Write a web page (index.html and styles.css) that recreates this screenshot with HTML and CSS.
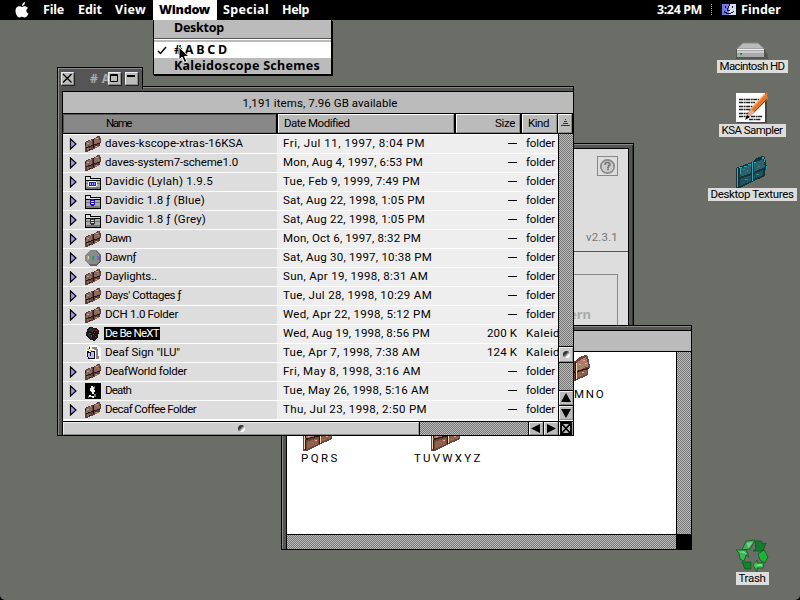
FILE: index.html
```html
<!DOCTYPE html>
<html lang="en">
<head>
<meta charset="utf-8">
<title>Finder</title>
<link rel="stylesheet" href="styles.css">
</head>
<body>
<svg class="defs" width="0" height="0">
  <symbol id="books" viewBox="0 0 16 16" shape-rendering="crispEdges">
    <path fill="#5d3f3b" d="M0 6L4 4 10 2 13 0H15L16 4 15 10 9 13 2 16H0Z"/>
    <path fill="#8c6a63" d="M1 6L7 4V9L1 11ZM9 3L14 1 15 6 9 9Z"/>
    <path fill="#a06b58" d="M11 4H14V6H11ZM10 10H14V11H12V12H10ZM2 12H6V13H4V14H2Z"/>
    <path fill="#2b1512" d="M1 11H3V10H6V9H9V8H12V7H15V8H12V9H9V10H6V11H3V12H1ZM8 3H9V12H8ZM0 7H1V9H0ZM4 13H6V14H4Z"/>
    <path fill="#c2a098" d="M5 4H6V5H5ZM11 2H13V3H11ZM2 7H4V8H2ZM11 10H12V11H11Z"/>
    <path fill="#57704d" d="M3 8H4V10H3ZM5 6H6V7H5ZM11 5H12V6H11ZM3 12H5V13H3Z"/>
  </symbol>
  <symbol id="bigbooks" viewBox="0 0 32 32" shape-rendering="crispEdges">
    <path fill="#6b453b" d="M0 12L8 9 16 6 21 2 26 0 29 1 31 12 29 14V20L16 26 4 32H0Z"/>
    <path fill="#b07c6b" d="M3 12L15 8V17L3 21ZM18 7L27 2 30 11 18 16Z"/>
    <path fill="#935f4c" d="M4 23L15 19V25L4 30ZM18 18L28 14V19L18 23Z"/>
    <path fill="#2e1814" d="M2 21H5V20H8V19H12V18H16V17H20V16H24V15H28V14H30V13H27V14H23V15H19V16H15V17H11V18H7V19H2ZM16 7H17V25H16ZM2 13H3V31H2Z"/>
    <path fill="#ead9b2" d="M1 13H2V30H1ZM17 8H18V24H17Z"/>
    <path fill="#7b8455" d="M6 13H8V14H6ZM10 15H12V16H10ZM22 8H24V9H22ZM25 11H27V12H25ZM20 20H22V21H20ZM8 23H10V24H8ZM19 11H20V13H19Z"/>
    <path fill="#dfaa96" d="M24 5H26V6H24ZM20 9H22V10H20ZM26 8H28V9H26ZM11 12H13V13H11ZM5 17H7V18H5ZM23 17H25V18H23ZM12 21H14V22H12Z"/>
  </symbol>
  <symbol id="davidic-lylah" viewBox="0 0 16 16" shape-rendering="crispEdges">
    <path fill="#000" d="M0 2H6V4H16V16H0Z"/><path fill="#ddd" d="M1 3H5V5H15V6H1Z"/><path fill="#aaa" d="M1 7H15V9H1ZM1 10H15V15H1Z"/><path fill="#777" d="M1 9H15V10H1ZM1 13H15V15H1Z"/>
    <path fill="#fff" d="M4 7H11V8H4ZM3 8H4V12H3ZM11 8H12V12H11ZM4 12H11V13H4Z"/><path fill="#30209a" d="M4 8H11V12H4Z"/><path fill="#aaf" d="M5 9H6V11H5ZM7 9H8V11H7ZM9 9H10V11H9Z"/>
  </symbol>
  <symbol id="davidic-blue" viewBox="0 0 16 16" shape-rendering="crispEdges">
    <path fill="#000" d="M0 2H6V4H16V16H0Z"/><path fill="#ddd" d="M1 3H5V5H15V6H1Z"/><path fill="#aaa" d="M1 7H15V9H1ZM1 10H15V15H1Z"/><path fill="#777" d="M1 9H15V10H1ZM1 13H15V15H1Z"/>
    <path fill="#2813a5" d="M6 6H9V7H10V12H9V13H6V12H5V7H6Z"/><path fill="#ddf" d="M6 8H9V9H6ZM6 10H9V11H6Z"/>
  </symbol>
  <symbol id="davidic-grey" viewBox="0 0 16 16" shape-rendering="crispEdges">
    <path fill="#000" d="M0 2H6V4H16V16H0Z"/><path fill="#ddd" d="M1 3H5V5H15V6H1Z"/><path fill="#aaa" d="M1 7H15V9H1ZM1 10H15V15H1Z"/><path fill="#777" d="M1 9H15V10H1ZM1 13H15V15H1Z"/>
    <path fill="#333" d="M6 6H9V7H10V12H9V13H6V12H5V7H6Z"/><path fill="#ddd" d="M6 8H9V9H6ZM6 10H9V11H6Z"/>
  </symbol>
  <symbol id="octagon" viewBox="0 0 16 16" shape-rendering="crispEdges">
    <path fill="#8a8a8a" d="M5 0H11L16 5V11L11 16H5L0 11V5Z"/><path fill="#666" d="M11 1L16 5V11L11 16H5L3 14H11L14 11V5Z"/>
    <path fill="#e9974d" d="M2 6H4V10H2Z"/><path fill="#fc9" d="M3 6H4V9H3Z"/><path fill="#16a08c" d="M7 6H9V10H7Z"/><path fill="#76c" d="M12 6H14V10H12Z"/>
  </symbol>
  <symbol id="cube" viewBox="0 0 16 16" shape-rendering="crispEdges">
    <path fill="#171717" d="M4 1L11 2 14 5 13 11 9 15 4 13 1 9 2 4Z"/><path fill="#2c2c2c" d="M5 2L10 3 8 6 3 5ZM3 8L7 9V13L4 11Z"/>
    <path fill="#a02424" d="M10 4H12V5H10ZM9 6H10V7H9ZM10 10H11V11H10ZM7 5H8V6H7Z"/><path fill="#147734" d="M4 7H6V8H4ZM6 9H7V11H6ZM8 8H9V9H8Z"/>
  </symbol>
  <symbol id="ilu" viewBox="0 0 16 16" shape-rendering="crispEdges">
    <path fill="#fff" d="M4 0H13L16 4V16H10L5 15 1 11V3Z"/><path fill="#111" d="M2 6H4V7H6V6H10V14H3V12H2ZM4 2H5V4H4Z"/>
    <path fill="#bbf" d="M3 8H5V11H9V13H4V12H3ZM6 7H9V11H6Z"/><path fill="#e7b12b" d="M2 3H4V5H2ZM5 5H7V6H5ZM4 1H5V2H4Z"/><path fill="#888" d="M7 2H12V4H13V11H14V14H11V5H9V4H7Z"/>
  </symbol>
  <symbol id="death" viewBox="0 0 16 16" shape-rendering="crispEdges">
    <path d="M0 0H16V16H0Z"/><path fill="#eee" d="M6 3H8V4H9V7H10V9H9V11H7V9H6V8H5V5H6ZM4 12H6V13H9V15H7V14H4Z"/><path fill="#777" d="M9 3H10V6H9ZM9 11H11V14H9ZM3 13H4V15H3Z"/>
  </symbol>
</svg>

<main class="desktop">
  <section class="window about">
    <div class="about-pane">
      <div class="about-head"><span class="help">
        <svg width="17" height="17" viewBox="0 0 17 17"><circle cx="8.500" cy="8.500" r="6.700" fill="#ccc" stroke="#888" stroke-width="1.700"/><path d="M6 7V5.500H7V4.500H10V5.500H11V7.500H9.500V9.500H8M8 11.500H10" fill="none" stroke="#777" stroke-width="1.300"/></svg>
      </span><span class="version" data-w="32">v2.3.1</span></div>
      <div class="about-box"><b>ern</b></div>
    </div>
  </section>

  <section class="window groups">
    <div class="groups-info"></div>
    <div class="groups-body">
      <div class="canvas">
        <div class="pin p1"><svg width="32" height="32"><use href="#bigbooks"/></svg><span data-w="36">P Q R S</span></div>
        <div class="pin p2"><svg width="32" height="32"><use href="#bigbooks"/></svg><span data-w="66">T U V W X Y Z</span></div>
        <div class="pin p3"><svg width="32" height="32"><use href="#bigbooks"/></svg><span data-w="29">M N O</span></div>
      </div>
      <div class="dither vbar"></div>
      <div class="dither hbar"></div>
      <div class="corner"></div>
    </div>
  </section>

  <div class="tab">
    <span class="tbtn"><svg width="11" height="11" viewBox="0 0 11 11"><path d="M1 1L9.500 9.500M9.500 1L1 9.500" stroke="#000" stroke-width="1.300"/></svg></span>
    <span class="tab-title"># A</span>
    <span class="tbtn"><svg width="11" height="11" viewBox="0 0 11 11"><path d="M1.500 1.500H8.500V8.500H1.500ZM1.500 2.500H8.500" stroke="#000" fill="none"/></svg></span>
    <span class="tbtn gap"><svg width="11" height="11" viewBox="0 0 11 11"><path d="M1 2H9V4H1Z"/></svg></span>
  </div>
  <section class="window list">
    <div class="info"><span data-w="155">1,191 items, 7.96 GB available</span></div>
    <div class="head">
      <div class="h on"><span data-w="25">Name</span></div>
      <div class="h"><span data-w="65">Date Modified</span></div>
      <div class="h end"><span data-w="20">Size</span></div>
      <div class="h"><span data-w="21">Kind</span></div>
      <div class="h sort"><svg width="9" height="8" viewBox="0 0 9 8" shape-rendering="crispEdges"><path fill="#333" d="M4 0H5V1H4ZM3 2H6V3H3ZM2 4H7V5H2ZM0 6H9V7H0Z"/></svg></div>
    </div>
    <div class="body">
      <div class="rows" id="rows"></div>
      <div class="vscroll">
        <div class="dither track1"></div>
        <div class="thumb"><i></i></div>
        <div class="dither track2"></div>
        <div class="arrow"><svg width="14" height="14"><path d="M7 2L12 11H2Z"/></svg></div>
        <div class="arrow"><svg width="14" height="14"><path d="M2 3H12L7 12Z"/></svg></div>
      </div>
    </div>
    <div class="hscroll">
      <div class="thumb"><i></i></div>
      <div class="dither"></div>
      <div class="arrow"><svg width="14" height="13"><path d="M2 6.500L11 2V11Z"/></svg></div>
      <div class="arrow"><svg width="14" height="13"><path d="M12 6.500L3 2V11Z"/></svg></div>
      <div class="arrow grow"><svg width="14" height="13"><path d="M2 1H12V12H2ZM2 1L12 12M12 1L2 12" fill="none" stroke="#000" stroke-width="1.800"/></svg></div>
    </div>
  </section>

  <div class="item hd">
    <svg width="32" height="18" viewBox="0 0 32 18"><path d="M8 3H24L29 8 32 13V17H4L2 9Z" fill="#555851"/><path d="M7 1H22L28.500 7H.5Z" fill="#bbb" stroke="#888"/><path d="M0 7H29V16H0Z" fill="#aaa"/><path d="M1 7H28V8H1Z" fill="#eee"/><path d="M1 9H28V11H1Z" fill="#ccc"/><path d="M0 15H29V17H0ZM0 7H1V16H0ZM28 7H29V16H28Z" fill="#555"/><path d="M4 11H6V12H4Z" fill="#d22"/><path d="M4 12H6V13H4Z" fill="#1a3"/></svg>
    <span data-w="65">Macintosh HD</span>
  </div>
  <div class="item ksa">
    <svg width="32" height="32" viewBox="0 0 32 32"><path d="M1 2H31V31H1Z" fill="#444"/><path d="M0 1H29V30H0Z" fill="#fff"/><path d="M3 7.500H23M3 10.500H19M3 14.500H17M3 17.500H15M3 21.500H14M3 24.500H12M15 24.500H26M13 27.500H25" stroke="#222" stroke-width="1.600" stroke-dasharray="4 .6 2 .5"/><path d="M31 0L32 7 18 21 10 27 13 19Z" fill="#dd7733"/><path d="M28 4L13 19M31 7L18 20" stroke="#842" stroke-width="1"/><path d="M29 2L15 17" stroke="#fa6" stroke-width="1.500"/><path d="M14 17L19 20 11 26Z" fill="#e8a79d"/><path d="M11 23L14 25 9 28Z"/></svg>
    <span data-w="61">KSA Sampler</span>
  </div>
  <div class="item tex">
    <svg width="32" height="32" viewBox="0 0 32 32" shape-rendering="crispEdges"><path fill="#12343b" d="M0 12L8 9 16 6 21 2 26 0 29 1 31 12 29 14V20L16 26 4 32H0Z"/><path fill="#2b626b" d="M4 13L15 8V17L4 21ZM18 7L27 3 29 11 18 16Z"/><path fill="#22525b" d="M4 23L15 19V25L4 30ZM18 18L27 14V19L18 23Z"/><path fill="#35a5b8" d="M1 12H2V31H1ZM16 6H17V25H16ZM4 12H5V18H4ZM26 1H28V3H26ZM28 3H29V6H28ZM3 11H6V12H3ZM18 6H20V7H18ZM30 10H31V13H30ZM8 10H11V11H8ZM12 8H15V9H12Z"/><path fill="#488070" d="M7 13H9V14H7ZM22 10H24V11H22ZM9 23H12V24H9ZM20 18H23V19H20ZM11 14H12V16H11Z"/></svg>
    <span data-w="83">Desktop Textures</span>
  </div>
  <div class="item trash">
    <svg width="32" height="32" viewBox="0 0 32 32" stroke="#075019" stroke-width=".7"><path fill="#43af5a" d="M10 1L19 0 14 9 6 10Z"/><path fill="#137d2d" d="M19 1H25L27 4 30 3 27 11H17L20 9Z"/><path fill="#39b952" d="M0 10H10L13 17 10 15 8 21 4 19 3 13Z"/><path fill="#1eb438" d="M22 14L28 10 32 17 29 23 24 20Z"/><path fill="#14832c" d="M6 22H15V29H9Z"/><path fill="#39c451" d="M17 25L21 20V23H28L27 28H21V32Z"/><path d="M11 3L17 2 12 8ZM3 12L8 11 10 14ZM22 24H26V26H20Z" fill="#a0e5ae" stroke="none" opacity=".65"/></svg>
    <span data-w="27">Trash</span>
  </div>

  <nav class="menubar">
    <svg class="apple" width="14" height="16" viewBox="0 0 14 16"><path fill="#fff" d="M7 4C7 2 8 .5 10 0 10 2 9 3.500 7 4ZM3 4.500C5 4 6 5 7 5S9 4 11 4.500C12 5 12.500 5.500 13 6 10.500 7.500 11 10.500 13.500 11.500 12.500 14 11 15.500 9.500 15.500 8.500 15 8 14.800 7 14.800S5.500 15.500 4.500 15.500C2 15 .5 11.500 .5 9S1.500 5 3 4.500Z"/></svg>
    <span class="m1" data-w="21">File</span><span class="m2" data-w="24">Edit</span><span class="m3" data-w="31">View</span><span class="m4"><b data-w="51">Window</b></span><span class="m5" data-w="46">Special</span><span class="m6" data-w="27">Help</span>
    <span class="clock" data-w="45">3:24 PM</span><i class="dots"></i>
    <svg class="face" width="14" height="13" viewBox="0 0 14 13" shape-rendering="crispEdges"><path fill="#77d" d="M0 1H7V12H0Z"/><path fill="#dde" d="M7 1H14V12H7Z"/><path fill="#114" d="M3 3H4V5H3ZM10 3H11V5H10ZM7 1H8V3H7V5H6V7H8V8H5V5H6V3H7ZM2 8H3V9H5V10H9V9H11V8H12V9H11V10H9V11H4V10H2Z"/></svg>
    <span class="app" data-w="40">Finder</span>
  </nav>
  <div class="menu">
    <div class="mi"><span data-w="50">Desktop</span></div>
    <hr>
    <div class="mi sel"><svg class="check" width="10" height="9" viewBox="0 0 10 9"><path d="M1 5L3.500 7.500 9 1" fill="none" stroke="#000" stroke-width="1.500"/></svg><span data-w="53"># A B C D</span></div>
    <div class="mi"><span data-w="146">Kaleidoscope Schemes</span></div>
  </div>
  <svg class="cursor" width="13" height="19" viewBox="0 0 13 19"><path d="M1 1V14L4 11 6.500 16.500 9 15.500 6.500 10.500H11Z" fill="#000" stroke="#fff"/></svg>
</main>
<script src="script.js"></script>
</body>
</html>
```
FILE: styles.css
```css
* { box-sizing: border-box; }
html, body { margin: 0; background: #000; }
body { width: 800px; height: 600px; overflow: hidden; font: 11.5px/14px Roboto, "Liberation Sans", sans-serif; color: #000; }
span, b { white-space: pre; }
.defs { position: absolute; }
.desktop { position: relative; width: 800px; height: 600px; overflow: hidden; background: #6b6e66; border-radius: 0 0 5px 5px; }
.dither { background: repeating-conic-gradient(#777 0 25%, #bbb 0 50%) 0 0 / 2px 2px; }

/* windows */
.window { position: absolute; border: 1px solid #000; background: #555; box-shadow: inset 1px 1px #888; display: flex; flex-direction: column; }

.about { left: 400px; top: 143px; width: 234px; height: 190px; padding: 4px 4px 0 4px; box-shadow: inset 0 1px #888, inset -1px 0 #333; }
.about-pane { flex: 1; border: 1px solid #000; background: #ddd; padding-right: 10px; color: #777; }
.about-head { height: 103px; border-bottom: 1px solid #555; margin-right: -10px; padding: 7px 10px 0 0; display: flex; flex-direction: column; align-items: flex-end; justify-content: space-between; }
.help { width: 21px; height: 20px; border: 1px solid #888; display: grid; place-items: center; }
.version { margin-bottom: 7px; }
.about-box { margin-top: 22px; height: 70px; border: 1px solid #888; border-bottom: 0; padding: 32px 26px 0 0; text-align: right; color: #aaa; }
.about-box b { font: bold 13px/14px "Noto Sans", sans-serif; }

.groups { left: 281px; top: 325px; width: 411px; height: 225px; padding: 4px 0 0 4px; border-bottom: 1px solid #000; }
.groups-info { height: 22px; background: #bbb; border: 1px solid #000; border-width: 1px 0 1px 1px; }
.groups-body { flex: 1; display: grid; grid-template: 182px 1fr / 1fr 15px; border-left: 1px solid #000; }
.canvas { position: relative; background: #fff; overflow: hidden; }
.groups .vbar { border-left: 1px solid #000; }
.groups .hbar { border-top: 1px solid #000; }
.corner { background: #000; }
.pin { position: absolute; width: 90px; display: flex; flex-direction: column; align-items: center; }
.p1 { left: -13px; top: 67px; }
.p2 { left: 115px; top: 67px; }
.p3 { left: 243px; top: 3px; }
.p3 span { margin-left: 27px; }

.tab { position: absolute; left: 57px; top: 67px; width: 86px; height: 22px; z-index: 2; border: 1px solid #000; border-bottom: 0; background: #555; box-shadow: inset 1px 1px #888; display: flex; padding: 4px 4px 0 3px; }
.tbtn { width: 13px; height: 13px; background: #bbb; border: 1px solid #eee; border-right-color: #888; border-bottom-color: #888; display: block; box-shadow: 1px 1px #222; }
.tbtn svg { display: block; }
.tbtn.gap { margin-left: 4px; }
.tab-title { width: 34px; padding-left: 16px; color: #aaa; font: bold 12px/13px "Noto Sans", sans-serif; overflow: hidden; letter-spacing: .5px; }

.list { left: 57px; top: 86px; width: 517px; height: 350px; padding: 4px 0 0 4px; }
.list > div { border-left: 1px solid #000; }
.info { height: 23px; border-top: 1px solid #000; border-bottom: 1px solid #000; background: #bbb; padding: 4px 0 0 4px; text-align: center; }
.head { height: 20px; display: grid; grid-template-columns: 213px 179px 65px 38px 14px; background: #000; border-bottom: 1px solid #000; }
.h { background: #bbb; border: 1px solid #fff; border-right-color: #888; border-bottom-color: #888; margin-right: 2px; padding: 1px 5px 0; }
.h.on { background: #888; border-color: #555 #777 #777 #555; padding-left: 42px; margin-right: 0; }
.h:nth-child(2) { margin-left: 2px; margin-right: 1px; }
.h:nth-child(3) { margin-left: 1px; margin-right: 0; text-align: right; padding-right: 4px; }
.h:nth-child(4) { margin-left: 2px; margin-right: 1px; }
.h.sort { margin: 0; padding: 4px 2px; border-left-color: #ddd; }
.sort svg { display: block; }

.body { display: flex; height: 287px; background: #fff; }
.rows { flex: 1; overflow: hidden; }
.row { height: 19px; border-top: 1px solid #fff; display: flex; line-height: 17px; background: #eee; }
.name { width: 214px; background: #ddd; display: flex; align-items: center; padding: 0 0 1px 6px; }
.tri { width: 8px; height: 12px; margin-right: 8px; }
.name .icon { width: 16px; height: 16px; margin: 1px 3px 0 0; }
.name span { padding: 0 1px; line-height: 13px; margin-bottom: 1px; }
.name .picked { background: #000; color: #fff; }
.date { width: 178px; padding-left: 6px; }
.size { width: 65px; text-align: right; padding-right: 3px; }
.size.dash i { display: inline-block; width: 9px; height: 1px; background: #000; vertical-align: 3px; }
.kind { flex: 1; padding-left: 6px; overflow: hidden; }
.vscroll { width: 15px; border-left: 1px solid #000; display: flex; flex-direction: column; }
.track1 { height: 213px; }
.track2 { flex: 1; }
.thumb, .arrow { background: #ccc; border: 1px solid #eee; border-right-color: #999; border-bottom-color: #888; display: grid; place-items: center; }
.thumb i { width: 7px; height: 7px; border-radius: 50%; background: linear-gradient(135deg, #333 0 35%, #fff 70%); }
.vscroll .thumb { height: 15px; box-shadow: 0 -1px #000, 0 1px #000; z-index: 1; }
.arrow { background: #bbb; }
.arrow svg { margin: -2px; }
.vscroll .arrow { height: 14px; box-shadow: 0 -1px #000; margin-bottom: 1px; z-index: 1; }
.hscroll { flex: 1; display: grid; grid-template-columns: 356px 108px 14px 14px 14px; column-gap: 1px; border-top: 1px solid #000; background: #000; }

/* desktop icons */
.item { position: absolute; width: 90px; display: flex; flex-direction: column; align-items: center; }
.item svg { display: block; overflow: visible; }
.item span { background: #ddd; line-height: 13px; height: 13px; padding: 0 3px; }
.hd { left: 707px; top: 42px; }
.ksa { left: 707px; top: 92px; }
.tex { left: 707px; top: 156px; }
.trash { left: 707px; top: 540px; }

/* menu bar and open menu */
.menubar { position: absolute; left: 0; top: 0; width: 800px; height: 20px; background: #000; color: #fff; display: flex; align-items: flex-start; font: bold 12.5px/19px "Noto Sans", "Open Sans", sans-serif; }
.apple { margin: 2px 14px 0 15px; flex: none; }
.menubar span { flex: none; }
.m1 { width: 35px; }
.m2 { width: 37px; }
.m3 { width: 38px; }
.m4 { width: 64px; height: 20px; background: #fff; color: #000; padding-left: 6px; margin-right: 6px; }
.m5 { width: 59px; }
.clock { margin-left: auto; }
.dots { width: 1px; height: 11px; margin: 4px 10px 0 9px; background: repeating-linear-gradient(#bbb 0 1px, #000 1px 2px); }
.face { margin: 3px 5px 0 0; }
.app { margin-right: 19px; }
.menu { position: absolute; left: 153px; top: 20px; width: 179px; height: 55px; z-index: 4; background: #bbb; border: 1px solid #000; border-top: 0; box-shadow: 1px 1px #000; font: bold 12.5px/16px "Noto Sans", "Open Sans", sans-serif; }
.mi { height: 16px; padding-left: 20px; position: relative; }
.mi:first-child { height: 18px; }
.mi.sel { background: #fff; }
.menu hr { margin: 0; height: 4px; border: 0; background: linear-gradient(#555 0 1px, #fff 1px 2px, #bbb 2px); }
.check { position: absolute; left: 3px; top: 4px; }
.cursor { position: absolute; left: 178px; top: 46px; z-index: 5; }
```
FILE: script.js
```javascript
// name, name width, date, date width, size, icon, expandable, selected
const files = [
  ["daves-kscope-xtras-16KSA", 138, "Fri, Jul 11, 1997, 8:04 PM", 142, "", "books", 1],
  ["daves-system7-scheme1.0", 133, "Mon, Aug 4, 1997, 6:53 PM", 140, "", "books", 1],
  ["Davidic (Lylah) 1.9.5", 108, "Tue, Feb 9, 1999, 7:49 PM", 137, "", "davidic-lylah", 1],
  ["Davidic 1.8 ƒ (Blue)", 100, "Sat, Aug 22, 1998, 1:05 PM", 142, "", "davidic-blue", 1],
  ["Davidic 1.8 ƒ (Grey)", 101, "Sat, Aug 22, 1998, 1:05 PM", 142, "", "davidic-grey", 1],
  ["Dawn", 26, "Mon, Oct 6, 1997, 8:32 PM", 138, "", "books", 1],
  ["Dawnƒ", 31, "Sat, Aug 30, 1997, 10:38 PM", 149, "", "octagon", 1],
  ["Daylights..", 52, "Sun, Apr 19, 1998, 8:31 AM", 145, "", "books", 1],
  ["Days' Cottages ƒ", 76, "Tue, Jul 28, 1998, 10:29 AM", 149, "", "books", 1],
  ["DCH 1.0 Folder", 73, "Wed, Apr 22, 1998, 5:12 PM", 148, "", "books", 1],
  ["De Be NeXT", 54, "Wed, Aug 19, 1998, 8:56 PM", 147, "200 K", "cube", 0, 1],
  ["Deaf Sign \"ILU\"", 75, "Tue, Apr 7, 1998, 7:38 AM", 137, "124 K", "ilu", 0],
  ["DeafWorld folder", 82, "Fri, May 8, 1998, 3:16 AM", 138, "", "books", 1],
  ["Death", 26, "Tue, May 26, 1998, 5:16 AM", 146, "", "death", 1],
  ["Decaf Coffee Folder", 91, "Thu, Jul 23, 1998, 2:50 PM", 144, "", "books", 1]
];

const triangle = '<svg class="tri" viewBox="0 0 8 12"><path d="M1.500 1L7 6 1.500 11Z" fill="#99f" stroke="#000" stroke-width="1.200"/></svg>';

document.getElementById("rows").innerHTML = files.map(([name, nw, date, dw, size, icon, open, picked]) => `
  <div class="row">
    <div class="name">${open ? triangle : '<i class="tri"></i>'}<svg class="icon"><use href="#${icon}"/></svg><span class="${picked ? "picked" : ""}" data-w="${nw}">${name}</span></div>
    <div class="date"><span data-w="${dw}">${date}</span></div>
    ${size ? `<div class="size"><span data-w="30">${size}</span></div>` : '<div class="size dash"><i></i></div>'}
    <div class="kind"><span data-w="${size ? 34 : 29}">${size ? "Kaleid" : "folder"}</span></div>
  </div>`).join("");

// Track each label so that its text spans data-w pixels.
document.querySelectorAll("[data-w]").forEach(el => {
  const range = document.createRange();
  range.selectNodeContents(el);
  const natural = range.getBoundingClientRect().width;
  el.style.letterSpacing = (el.dataset.w - natural) / el.textContent.length + "px";
});
```
